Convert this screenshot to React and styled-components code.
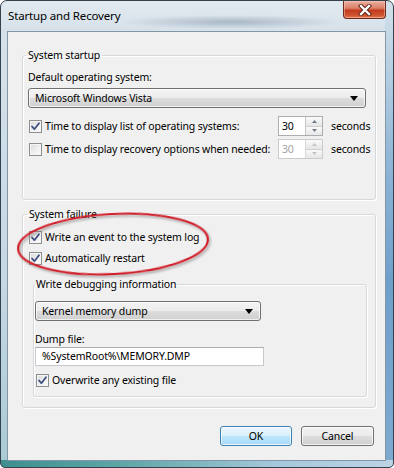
import React from "react";
import styled, { createGlobalStyle } from "styled-components";

const GlobalStyle = createGlobalStyle`
  html, body { margin: 0; padding: 0; background: #ffffff; }
  body {
    font-family: "Noto Sans", "Open Sans", sans-serif;
    font-size: 10.5px;
    letter-spacing: -0.15px;
    color: #000;
  }
  * { box-sizing: border-box; }
`;

const Window = styled.div`
  position: relative;
  width: 394px;
  height: 468px;
  border: 1px solid #34424d;
  border-radius: 7px 7px 5px 5px;
  display: flex;
  flex-direction: column;
  overflow: hidden;
  background:
    linear-gradient(90deg, #3f8f8f 0%, #5ea5a6 30%, #7fb6be 50%, #a6c8dc 70%, #bcd3e4 100%) left bottom / 100% 7px no-repeat,
    linear-gradient(180deg, #d3e1ea 0%, #8fb5d6 35%, #6e9fcb 60%, #7eaad0 100%) right top / 8px 100% no-repeat,
    radial-gradient(ellipse 110px 7px at 230px 21px, rgba(80, 100, 125, 0.35), rgba(80, 100, 125, 0)),
    linear-gradient(180deg, #e2eaf0 0%, #d6e1ea 30px, #c6d8e4 60%, #a9cad4 100%);
`;

const TitleBar = styled.div`
  height: 30px;
  flex-shrink: 0;
  display: flex;
  align-items: flex-start;
`;

const Title = styled.div`
  padding: 7px 0 0 7px;
  font-size: 11.5px;
  line-height: 16px;
  color: #000;
`;

const CloseButton = styled.div`
  margin-left: auto;
  margin-right: 7px;
  width: 43px;
  height: 18px;
  border: 1px solid #6d2a1e;
  border-top: none;
  border-radius: 0 0 4px 4px;
  background: linear-gradient(180deg, #eab1a3 0%, #dc8068 42%, #c23b20 55%, #d0552f 85%, #e27a55 100%);
  box-shadow: inset 0 0 0 1px rgba(255, 210, 190, 0.45);
  display: flex;
  align-items: center;
  justify-content: center;
`;

const Client = styled.div`
  flex: 1;
  margin: 0 7px 6px 6px;
  border: 1px solid #8396a6;
  background: #f0f0f0;
  padding: 15px 9px 0 14px;
  display: flex;
  flex-direction: column;
`;

const Group = styled.fieldset`
  margin: ${(p) => p.$margin || "0"};
  padding: ${(p) => p.$padding || "0"};
  min-inline-size: 0;
  border: 1px solid #d5d9dc;
  border-radius: 3px;
  box-shadow: inset 1px 1px 0 #ffffff, 1px 1px 0 #ffffff;
  display: flex;
  flex-direction: column;
  align-items: stretch;
`;

const Legend = styled.legend`
  padding: 0 ${(p) => p.$pad || 2}px;
  margin-left: ${(p) => p.$offset || 0}px;
  line-height: 16px;
  color: #000;
`;

const Label = styled.div`
  line-height: 16px;
  margin-top: ${(p) => p.$top || 0}px;
`;

const Select = styled.div`
  margin-top: ${(p) => p.$top || 0}px;
  width: ${(p) => p.$width || "100%"};
  height: 20px;
  border: 1px solid #707070;
  border-radius: 3px;
  background: linear-gradient(180deg, #f4f4f4 0%, #ececec 48%, #dcdcdc 52%, #d0d0d0 100%);
  box-shadow: inset 0 0 0 1px rgba(255, 255, 255, 0.7);
  display: flex;
  align-items: center;
  justify-content: space-between;
  padding: 0 7px 0 6px;
  line-height: 16px;
`;

const Row = styled.div`
  margin-top: ${(p) => p.$top || 0}px;
  height: ${(p) => p.$height || 16}px;
  display: flex;
  align-items: center;
`;

const CheckLabel = styled.label`
  display: flex;
  align-items: center;
  gap: 3px;
  line-height: 16px;
  white-space: nowrap;
  flex: ${(p) => (p.$width ? `0 0 ${p.$width}px` : "0 0 auto")};
  margin-left: ${(p) => p.$indent || 0}px;
`;

const Box = styled.span`
  width: 13px;
  height: 13px;
  flex-shrink: 0;
  border: 1px solid #8e8f8f;
  background: linear-gradient(135deg, #d9d9d9 0%, #f0f0f0 55%, #fdfdfd 100%);
  box-shadow: inset 0 0 0 1px #f5f5f5;
  display: flex;
  align-items: center;
  justify-content: center;
`;

const SpinBox = styled.div`
  width: 45px;
  height: 20px;
  flex-shrink: 0;
  display: flex;
  border: 1px solid ${(p) => (p.$disabled ? "#c9cbcf" : "#abadb3")};
  background: #fff;
`;

const SpinValue = styled.div`
  flex: 1;
  padding-left: 3px;
  line-height: 18px;
  color: ${(p) => (p.$disabled ? "#a3a3a3" : "#000")};
`;

const SpinButtons = styled.div`
  width: 17px;
  display: flex;
  flex-direction: column;
  border-left: 1px solid ${(p) => (p.$disabled ? "#d8d8d8" : "#c6c6c6")};
`;

const SpinHalf = styled.div`
  flex: 1;
  display: flex;
  align-items: center;
  justify-content: center;
  background: linear-gradient(180deg, #fafafa 0%, #e6e6e6 100%);
  border-bottom: ${(p) => (p.$top ? "1px solid #d0d0d0" : "none")};
`;

const Unit = styled.span`
  margin-left: 8px;
  line-height: 16px;
`;

const TextInput = styled.div`
  margin-top: ${(p) => p.$top || 0}px;
  width: ${(p) => p.$width};
  height: 19px;
  border: 1px solid #c5c9ce;
  border-top-color: #abadb3;
  background: #fff;
  padding-left: 6px;
  line-height: 17px;
`;

const ButtonRow = styled.div`
  margin-top: 18px;
  margin-right: 2px;
  display: flex;
  justify-content: flex-end;
  gap: 9px;
`;

const Button = styled.div`
  width: ${(p) => p.$width}px;
  height: 20px;
  border-radius: 3px;
  border: 1px solid ${(p) => (p.$primary ? "#3c7fb1" : "#707070")};
  background: ${(p) =>
    p.$primary
      ? "linear-gradient(180deg, #eaf6fd 0%, #d9f0fc 48%, #bee6fd 52%, #a7d9f5 100%)"
      : "linear-gradient(180deg, #f2f2f2 0%, #ebebeb 48%, #dddddd 52%, #cfcfcf 100%)"};
  box-shadow: inset 0 0 0 1px rgba(255, 255, 255, 0.75);
  display: flex;
  align-items: center;
  justify-content: center;
  line-height: 16px;
`;

const Annotation = styled.svg`
  position: absolute;
  left: 0;
  top: 0;
  pointer-events: none;
`;

const Check = () => (
  <svg width="11" height="11" viewBox="0 0 11 11">
    <path d="M2 5.5 L4.4 8.2 L9 2.2" fill="none" stroke="#3f4f80" strokeWidth="1.8" strokeLinecap="round" strokeLinejoin="round" />
  </svg>
);

const Checkbox = ({ checked, children, width, indent }) => (
  <CheckLabel $width={width} $indent={indent}>
    <Box>{checked && <Check />}</Box>
    <span>{children}</span>
  </CheckLabel>
);

const Arrow = ({ up, color }) => (
  <svg width="5" height="3" viewBox="0 0 5 3">
    <path d={up ? "M0 3 L2.5 0 L5 3 Z" : "M0 0 L5 0 L2.5 3 Z"} fill={color} />
  </svg>
);

const Spinner = ({ value, disabled }) => (
  <SpinBox $disabled={disabled}>
    <SpinValue $disabled={disabled}>{value}</SpinValue>
    <SpinButtons $disabled={disabled}>
      <SpinHalf $top>
        <Arrow up color={disabled ? "#c4c4c4" : "#6f7a88"} />
      </SpinHalf>
      <SpinHalf>
        <Arrow color={disabled ? "#c4c4c4" : "#6f7a88"} />
      </SpinHalf>
    </SpinButtons>
  </SpinBox>
);

const DropArrow = () => (
  <svg width="8" height="5" viewBox="0 0 8 5">
    <path d="M0 0 L8 0 L4 5 Z" fill="#000" />
  </svg>
);

export default function App() {
  return (
    <>
      <GlobalStyle />
      <Window>
        <TitleBar>
          <Title>Startup and Recovery</Title>
          <CloseButton>
            <svg width="14" height="12" viewBox="0 0 14 12">
              <path d="M3 2 L11 10 M11 2 L3 10" stroke="#5a1d12" strokeWidth="4.2" strokeLinecap="square" />
              <path d="M3 2 L11 10 M11 2 L3 10" stroke="#ffffff" strokeWidth="2.4" strokeLinecap="square" />
            </svg>
          </CloseButton>
        </TitleBar>
        <Client>
          <Group $padding="0 9px 40px 5px">
            <Legend $offset={-2}>System startup</Legend>
            <Label $top={6}>Default operating system:</Label>
            <Select $top={3}>
              <span>Microsoft Windows Vista</span>
              <DropArrow />
            </Select>
            <Row $top={8} $height={20}>
              <Checkbox checked width={249} indent={1}>
                Time to display list of operating systems:
              </Checkbox>
              <Spinner value="30" />
              <Unit>seconds</Unit>
            </Row>
            <Row $top={3} $height={20}>
              <Checkbox width={249} indent={1}>
                Time to display recovery options when needed:
              </Checkbox>
              <Spinner value="30" disabled />
              <Unit>seconds</Unit>
            </Row>
          </Group>
          <Group $margin="6px 0 0 0" $padding="0 8px 10px 5px">
            <Legend $offset={-1}>System failure</Legend>
            <Row $top={7}>
              <Checkbox checked indent={1}>Write an event to the system log</Checkbox>
            </Row>
            <Row $top={5}>
              <Checkbox checked indent={1}>Automatically restart</Checkbox>
            </Row>
            <Group $margin="10px 0 0 5px" $padding="0 8px 8px 1px">
              <Legend $pad={1}>Write debugging information</Legend>
              <Select $top={9} $width="226px">
                <span>Kernel memory dump</span>
                <DropArrow />
              </Select>
              <Label $top={10}>Dump file:</Label>
              <TextInput $width="229px">%SystemRoot%\MEMORY.DMP</TextInput>
              <Row $top={6}>
                <Checkbox checked indent={1}>Overwrite any existing file</Checkbox>
              </Row>
            </Group>
          </Group>
          <ButtonRow>
            <Button $primary $width={72}>OK</Button>
            <Button $width={73}>Cancel</Button>
          </ButtonRow>
        </Client>
        <Annotation width="394" height="468" viewBox="0 0 394 468">
          <defs>
            <filter id="shadow" x="-10%" y="-30%" width="120%" height="160%">
              <feDropShadow dx="1.5" dy="2" stdDeviation="1.2" floodColor="#6a6a6a" floodOpacity="0.55" />
            </filter>
          </defs>
          <ellipse
            cx="112"
            cy="243"
            rx="95"
            ry="30"
            transform="rotate(-3 112 243)"
            fill="none"
            stroke="#d21f2b"
            strokeWidth="2.2"
            filter="url(#shadow)"
          />
        </Annotation>
      </Window>
    </>
  );
}
